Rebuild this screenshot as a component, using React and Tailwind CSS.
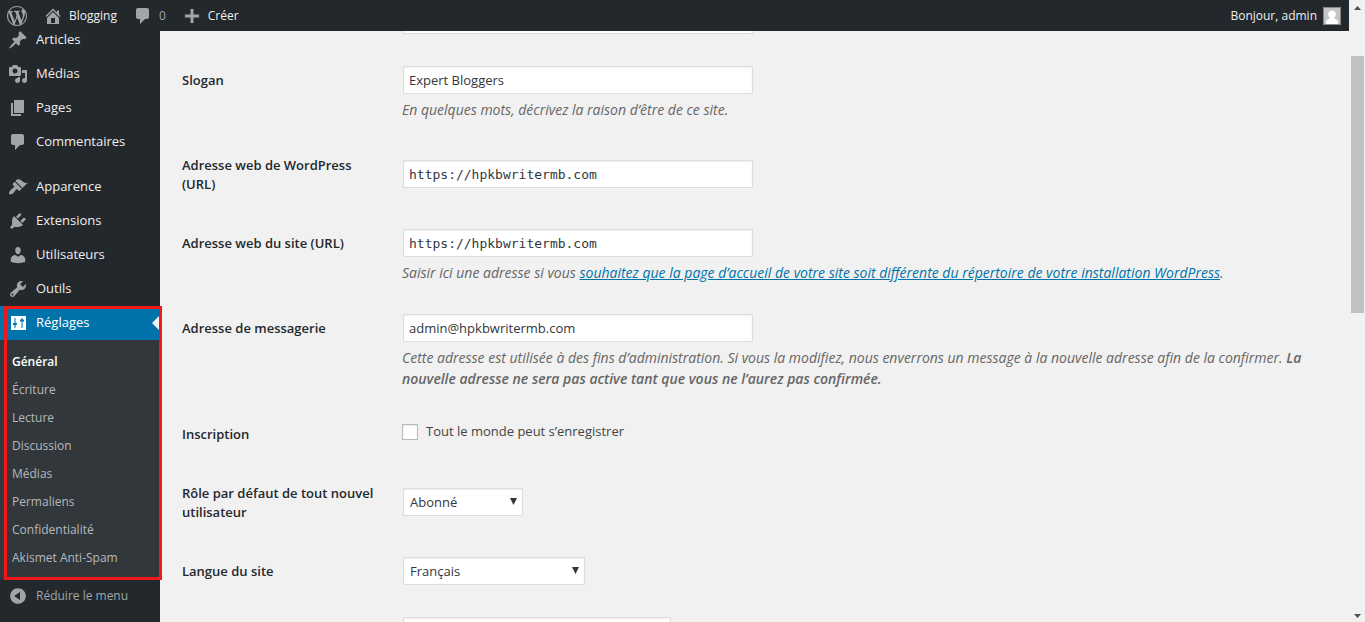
import { useState } from "react";

const icons = {
    wordpress: "M20 10c0-5.51-4.49-10-10-10C4.48 0 0 4.49 0 10c0 5.52 4.48 10 10 10 5.51 0 10-4.48 10-10zM7.78 15.37L4.37 6.22c.55-.02 1.17-.08 1.17-.08.5-.06.44-1.13-.06-1.11 0 0-1.45.11-2.37.11-.18 0-.37 0-.58-.01C4.12 2.69 6.87 1.11 10 1.11c2.33 0 4.45.87 6.05 2.34-.68-.11-1.65.39-1.65 1.58 0 .74.45 1.36.9 2.1.35.61.55 1.36.55 2.46 0 1.49-1.4 5-1.4 5l-3.03-8.37c.54-.02.82-.17.82-.17.5-.05.44-1.25-.06-1.22 0 0-1.44.12-2.38.12-.87 0-2.33-.12-2.33-.12-.5-.03-.56 1.2-.06 1.22l.92.08 1.26 3.41zM17.41 10c.24-.64.74-1.87.43-4.25.7 1.29 1.05 2.71 1.05 4.25 0 3.29-1.73 6.24-4.4 7.78.97-2.59 1.94-5.2 2.92-7.78zM6.1 18.09C3.12 16.65 1.11 13.53 1.11 10c0-1.3.23-2.48.72-3.59C3.25 10.3 4.67 14.2 6.1 18.09zm4.03-6.63l2.58 6.98c-.86.29-1.76.45-2.71.45-.79 0-1.57-.11-2.29-.33.81-2.38 1.62-4.74 2.42-7.1z",
    home: "M16 8.5l1.53 1.53-1.06 1.06L10 4.6l-6.47 6.49-1.06-1.06L10 2.5l4 4v-2h2v4zm-6-2.46l6 5.99V18H4v-5.97zM12 17v-5H8v5h4z",
    comment: "M5 2h9c1.1 0 2 .9 2 2v7c0 1.1-.9 2-2 2h-2l-5 5v-5H5c-1.1 0-2-.9-2-2V4c0-1.1.9-2 2-2z",
    plus: "M17 8.5v3h-5.500v5.500h-3v-5.500H3v-3h5.500V3h3v5.500H17z",
    post: "M10.44 3.02l1.82-1.82 6.36 6.35-1.83 1.82c-1.05-.68-2.48-.57-3.41.36l-.75.75c-.92.93-1.04 2.35-.35 3.41l-1.83 1.82-2.41-2.41-2.8 2.79c-.42.42-3.38 2.71-3.8 2.29s1.86-3.39 2.28-3.81l2.79-2.79L4.1 9.36l1.83-1.82c1.05.69 2.48.57 3.4-.36l.75-.75c.93-.92 1.05-2.35.36-3.41z",
    media: "M13 11V4c0-.55-.45-1-1-1h-1.67L9 1H5L3.67 3H2c-.55 0-1 .45-1 1v7c0 .55.45 1 1 1h10c.55 0 1-.45 1-1zM7 4.5c1.38 0 2.5 1.12 2.5 2.5S8.38 9.5 7 9.5 4.5 8.38 4.5 7 5.62 4.5 7 4.5zM14 6h5v10.5c0 1.38-1.12 2.5-2.5 2.5S14 17.88 14 16.5s1.12-2.5 2.5-2.5c.17 0 .34.02.5.05V9h-3V6zm-4 8.05V13h2v3.5c0 1.38-1.12 2.5-2.5 2.5S7 17.88 7 16.5 8.12 14 9.5 14c.17 0 .34.02.5.05z",
    page: "M6 15V2h10v13H6zm-1 1h8v2H3V5h2v11z",
    appearance: "M14.48 11.06L7.41 3.99l1.5-1.5c.5-.56 2.3-.47 3.51.32 1.21.8 1.43 1.28 2.91 2.1 1.18.64 2.45 1.26 4.45.85zm-.71.71L6.7 4.7 4.93 6.47c-.39.39-.39 1.02 0 1.41l1.06 1.06c.39.39.39 1.03 0 1.42-.6.6-1.43 1.11-2.21 1.69-.35.26-.7.53-1.01.84C1.43 14.23.4 16.08 1.4 17.07c.99 1 2.84-.03 4.18-1.36.31-.31.58-.66.85-1.02.57-.78 1.08-1.61 1.69-2.21.39-.39 1.02-.39 1.41 0l1.06 1.06c.39.39 1.02.39 1.41 0z",
    plugins: "M13.11 4.36L9.87 7.6 8 5.73l3.24-3.24c.35-.34 1.05-.2 1.56.32.52.51.66 1.21.31 1.55zm-8 1.77l.91-1.12 9.01 9.01-1.19.84c-.71.71-2.63 1.16-3.82 1.16H6.14L4.9 17.26c-.59.59-1.54.59-2.12 0-.59-.58-.59-1.53 0-2.12l1.24-1.24v-3.88c0-1.13.4-3.19 1.09-3.89zm7.26 3.97l3.24-3.24c.34-.35 1.04-.21 1.55.31.52.51.66 1.21.31 1.55l-3.24 3.25z",
    users: "M10 9.25c-2.27 0-2.73-3.44-2.73-3.44C7 4.02 7.82 2 9.97 2c2.16 0 2.98 2.02 2.71 3.81 0 0-.41 3.44-2.68 3.44zm0 2.57L12.72 10c2.39 0 4.52 2.33 4.52 4.53v2.49s-3.65 1.13-7.24 1.13c-3.65 0-7.24-1.13-7.24-1.13v-2.49c0-2.25 1.94-4.48 4.47-4.48z",
    tools: "M16.68 9.77c-1.34 1.34-3.3 1.67-4.95.99l-5.41 6.52c-.99.99-2.59.99-3.58 0s-.99-2.59 0-3.57l6.52-5.42c-.68-1.65-.35-3.61.99-4.95 1.28-1.28 3.12-1.62 4.72-1.06l-2.89 2.89 2.82 2.82 2.86-2.87c.53 1.58.18 3.39-1.08 4.65zM3.81 16.21c.4.39 1.04.39 1.43 0 .4-.4.4-1.04 0-1.43-.39-.4-1.03-.4-1.43 0-.39.39-.39 1.03 0 1.43z",
    settings: "M3 3h15v14H3zM6.500 5v5H5v1.500l1.500 1V15h1v-2.500l1.500-1V10H7.500V5zM13.500 5v1L12 7v1.500h1.500V15h1V8.500H16V7l-1.500-1V5z",
    collapse: "M10 2.16c4.33 0 7.84 3.51 7.84 7.84s-3.51 7.84-7.84 7.84S2.16 14.33 2.16 10 5.71 2.16 10 2.16zm2 11.72V6.12L6.18 9.97z",
};

const contentMenu = [
    { icon: "post", text: "Articles" },
    { icon: "media", text: "Médias" },
    { icon: "page", text: "Pages" },
    { icon: "comment", text: "Commentaires" },
];

const adminMenu = [
    { icon: "appearance", text: "Apparence" },
    { icon: "plugins", text: "Extensions" },
    { icon: "users", text: "Utilisateurs" },
    { icon: "tools", text: "Outils" },
];

const settingsMenu = [
    "Général",
    "Écriture",
    "Lecture",
    "Discussion",
    "Médias",
    "Permaliens",
    "Confidentialité",
    "Akismet Anti-Spam",
];

const fieldClass = "h-7 border border-[#ddd] bg-white text-[#32373c] shadow-[inset_0_1px_2px_rgba(0,0,0,0.07)] outline-none";

function Icon({ name, className = "" }) {
    return (
        <svg className={`size-5 shrink-0 fill-current ${className}`} viewBox="0 0 20 20" aria-hidden="true">
            <path d={icons[name]} fillRule={name === "settings" ? "evenodd" : "nonzero"} />
        </svg>
    );
}

function MenuItem({ icon, text }) {
    return (
        <li>
            <a href="#" className="flex h-[34px] items-center gap-2 px-2 text-[#eee]">
                <Icon name={icon} className="text-[#a0a5aa]" />
                {text}
            </a>
        </li>
    );
}

function AdminBar() {
    return (
        <header className="flex h-[31px] shrink-0 items-center justify-between bg-[#23282d] pr-2 pl-[7px] text-xs text-[#eee]">
            <div className="flex items-center gap-4">
                <a href="#" aria-label="WordPress">
                    <Icon name="wordpress" className="text-[#a0a5aa]" />
                </a>
                <a href="#" className="flex items-center gap-1.5">
                    <Icon name="home" className="text-[#a0a5aa]" />
                    Blogging
                </a>
                <a href="#" className="flex items-center gap-1.5 text-[#a0a5aa]">
                    <Icon name="comment" />
                    0
                </a>
                <a href="#" className="flex items-center gap-1.5">
                    <Icon name="plus" className="text-[#a0a5aa]" />
                    Créer
                </a>
            </div>
            <a href="#" className="flex items-center gap-1.5">
                Bonjour, admin
                <svg className="size-[18px]" viewBox="0 0 18 18" aria-hidden="true">
                    <rect width="18" height="18" fill="#82878c" />
                    <rect x="1" y="1" width="16" height="16" fill="#c5c5c5" />
                    <path fill="#fff" d="M9 3.500c2.300 0 3.800 1.600 3.800 3.700 0 1.500-.6 2.600-1.500 3.300v.9c2 .5 3.700 1.700 3.700 3.800V17H3v-1.800c0-2.100 1.700-3.300 3.700-3.800v-.9c-.9-.7-1.500-1.800-1.500-3.300 0-2.100 1.500-3.700 3.800-3.700z" />
                </svg>
            </a>
        </header>
    );
}

function Sidebar() {
    return (
        <nav className="w-40 shrink-0 bg-[#23282d] text-[13px]">
            <ul className="-mt-2">
                {contentMenu.map((item) => <MenuItem key={item.text} {...item} />)}
            </ul>
            <ul className="mt-[11px]">
                {adminMenu.map((item) => <MenuItem key={item.text} {...item} />)}
            </ul>
            <div className="relative">
                <a href="#" className="relative flex h-[34px] items-center gap-2 bg-[#0073aa] px-2 text-white">
                    <Icon name="settings" />
                    Réglages
                    <span className="absolute right-0 border-y-8 border-r-8 border-y-transparent border-r-[#f1f1f1]" />
                </a>
                <ul className="bg-[#32373c] py-2 text-xs text-[#b4b9be]">
                    {settingsMenu.map((text, i) => (
                        <li key={text}>
                            <a href="#" className={`flex h-7 items-center px-3 ${i === 0 ? "font-semibold text-white" : ""}`}>{text}</a>
                        </li>
                    ))}
                </ul>
                <div className="pointer-events-none absolute top-0 -right-0.5 bottom-0 left-1 border-3 border-[#f01818]" />
            </div>
            <button type="button" className="flex h-8 items-center gap-2 px-2 text-xs text-[#a0a5aa]">
                <Icon name="collapse" />
                Réduire le menu
            </button>
        </nav>
    );
}

function Row({ id, label, children }) {
    return (
        <div className="flex">
            <div className="w-[220px] shrink-0 pt-[21px] pr-5 pb-[19px] leading-[19px] font-semibold text-[#23282d]">
                {label && <label htmlFor={id}>{label}</label>}
            </div>
            <div className="min-w-0 flex-1 self-center py-[15px]">{children}</div>
        </div>
    );
}

function TextField({ className = "", ...props }) {
    return <input className={`${fieldClass} m-px block w-[350px] max-w-full px-[5px] ${className}`} {...props} />;
}

function Select({ id, width, options }) {
    return (
        <div className={`relative m-px ${width}`}>
            <select id={id} className={`${fieldClass} block w-full appearance-none px-1.5 pt-0.5`}>
                {options.map((option) => <option key={option}>{option}</option>)}
            </select>
            <svg className="pointer-events-none absolute top-2.5 right-1.5 h-[7px] w-[7px]" viewBox="0 0 7 7" aria-hidden="true">
                <path d="M0 0h7L3.500 7z" fill="#32373c" />
            </svg>
        </div>
    );
}

function Description({ children }) {
    return <p className="mt-[5px] text-sm leading-[21px] text-[#666] italic">{children}</p>;
}

function ScrollBar() {
    return (
        <div className="flex w-4 shrink-0 flex-col items-center justify-between bg-[#f1f1f1] pt-1.5 pb-1">
            <svg className="h-1 w-[7px]" viewBox="0 0 7 4" aria-hidden="true"><path d="M3.500 0L7 4H0z" fill="#505050" /></svg>
            <div className="mt-[46px] mb-auto h-[42%] w-[13px] bg-[#c1c1c1]" />
            <svg className="h-1 w-[7px]" viewBox="0 0 7 4" aria-hidden="true"><path d="M0 0h7L3.500 4z" fill="#505050" /></svg>
        </div>
    );
}

export default function App() {
    const [state, setState] = useState({
        title: "",
        slogan: "Expert Bloggers",
        wpUrl: "https://hpkbwritermb.com",
        siteUrl: "https://hpkbwritermb.com",
        email: "admin@hpkbwritermb.com",
        register: false,
    });

    function handleChange(e) {
        const target = e.currentTarget;
        setState({
            ...state,
            [target.name]: target.type === "checkbox" ? target.checked : target.value,
        });
    }

    return (
        <div className="flex h-screen overflow-hidden bg-[#f1f1f1] font-['Segoe_UI','Open_Sans',sans-serif]">
            <div className="flex min-w-0 flex-1 flex-col">
                <AdminBar />
                <div className="flex min-h-0 flex-1 overflow-hidden">
                    <Sidebar />
                    <main className="min-w-0 flex-1 pr-[30px] pl-[22px] text-[13px] text-[#444]">
                        <form className="-mt-[41px]">
                            <Row id="title">
                                <TextField aria-label="Titre du site" name="title" type="text" value={state.title} onChange={handleChange} />
                            </Row>
                            <Row id="slogan" label="Slogan">
                                <TextField id="slogan" name="slogan" type="text" value={state.slogan} onChange={handleChange} />
                                <Description>En quelques mots, décrivez la raison d’être de ce site.</Description>
                            </Row>
                            <Row id="wpUrl" label="Adresse web de WordPress (URL)">
                                <TextField id="wpUrl" name="wpUrl" type="url" className="font-['Consolas','DejaVu_Sans_Mono',monospace]" value={state.wpUrl} onChange={handleChange} />
                            </Row>
                            <Row id="siteUrl" label="Adresse web du site (URL)">
                                <TextField id="siteUrl" name="siteUrl" type="url" className="font-['Consolas','DejaVu_Sans_Mono',monospace]" value={state.siteUrl} onChange={handleChange} />
                                <Description>
                                    Saisir ici une adresse si vous <a href="#" className="text-[#0073aa] underline">souhaitez que la page d’accueil de votre site soit différente du répertoire de votre installation WordPress</a>.
                                </Description>
                            </Row>
                            <Row id="email" label="Adresse de messagerie">
                                <TextField id="email" name="email" type="email" value={state.email} onChange={handleChange} />
                                <Description>
                                    Cette adresse est utilisée à des fins d’administration. Si vous la modifiez, nous enverrons un message à la nouvelle adresse afin de la confirmer. <strong className="font-semibold">La nouvelle adresse ne sera pas active tant que vous ne l’aurez pas confirmée.</strong>
                                </Description>
                            </Row>
                            <Row id="register" label="Inscription">
                                <label className="flex items-center gap-2 pb-1">
                                    <input id="register" name="register" type="checkbox" className="size-4 appearance-none border border-[#b4b9be] bg-white shadow-[inset_0_1px_2px_rgba(0,0,0,0.1)] checked:bg-[#1e8cbe]" checked={state.register} onChange={handleChange} />
                                    Tout le monde peut s’enregistrer
                                </label>
                            </Row>
                            <Row id="role" label="Rôle par défaut de tout nouvel utilisateur">
                                <Select id="role" width="w-[120px]" options={["Abonné", "Contributeur", "Auteur", "Éditeur", "Administrateur"]} />
                            </Row>
                            <Row id="language" label="Langue du site">
                                <Select id="language" width="w-[182px]" options={["Français", "English (United States)"]} />
                            </Row>
                            <Row id="timezone" label="Fuseau horaire">
                                <Select id="timezone" width="w-[268px]" options={["UTC+0", "UTC+1"]} />
                            </Row>
                        </form>
                    </main>
                </div>
            </div>
            <ScrollBar />
        </div>
    );
}
